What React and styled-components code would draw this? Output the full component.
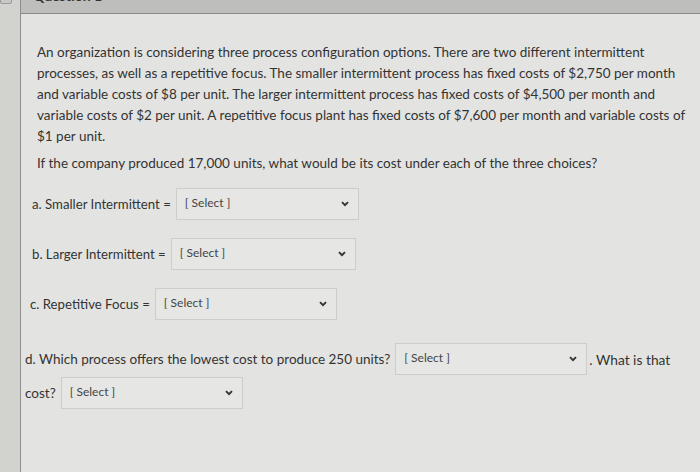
import React from "react";
import styled, { createGlobalStyle } from "styled-components";

const GlobalStyle = createGlobalStyle`
  html, body {
    margin: 0;
    padding: 0;
    background: #e3e4e1;
  }
  body {
    font-family: Lato, "Open Sans", sans-serif;
    color: #333;
  }
`;

const Chevron = () => (
  <svg width="8" height="6" viewBox="0 0 8 6">
    <path d="M1 1.2l3 3 3-3" fill="none" stroke="#333" strokeWidth="1.9" />
  </svg>
);

const Dropdown = ({ width }) => (
  <SelectBox $width={width}>
    <SelectText>[ Select ]</SelectText>
    <Chevron />
  </SelectBox>
);

const App = () => {
  return (
    <>
      <GlobalStyle />
      <Page>
        <Rail>
          <Check />
        </Rail>
        <QuestionBox>
          <Header>
            <HeaderTitle>Question 1</HeaderTitle>
          </Header>
          <Content>
            <Para>
              An organization is considering three process configuration options. There are two different intermittent
              processes, as well as a repetitive focus. The smaller intermittent process has fixed costs of $2,750 per month
              and variable costs of $8 per unit. The larger intermittent process has fixed costs of $4,500 per month and
              variable costs of $2 per unit. A repetitive focus plant has fixed costs of $7,600 per month and variable costs of
              $1 per unit.
            </Para>
            <Para>
              If the company produced 17,000 units, what would be its cost under each of the three choices?
            </Para>
            <Row $top={14} $indent={7}>
              <Label>a. Smaller Intermittent =</Label>
              <Dropdown width={183} />
            </Row>
            <Row $top={18} $indent={7}>
              <Label>b. Larger Intermittent =</Label>
              <Dropdown width={185} />
            </Row>
            <Row $top={18} $indent={5}>
              <Label>c. Repetitive Focus =</Label>
              <Dropdown width={182} />
            </Row>
            <Row $top={23} $indent={0}>
              <Label $size={13.5}>d. Which process offers the lowest cost to produce 250 units?</Label>
              <Dropdown width={192} />
              <Label $size={13.8} $tight>. What is that</Label>
            </Row>
            <Row $top={2} $indent={0}>
              <Label $size={13.5}>cost?</Label>
              <Dropdown width={182} />
            </Row>
          </Content>
        </QuestionBox>
      </Page>
    </>
  );
};

const Page = styled.div`
  display: flex;
  width: 700px;
  height: 472px;
  overflow: hidden;
  background: #e3e4e1;
`;

const Rail = styled.div`
  width: 20px;
  flex-shrink: 0;
  background: #d2d2cf;
  border-right: 1px solid #8e8e8c;
  position: relative;
`;

const Check = styled.div`
  position: absolute;
  left: 0;
  top: -8px;
  width: 10px;
  height: 10px;
  border: 1px solid #9a9a98;
  border-radius: 2px;
  background: #c8c8c6;
`;

const QuestionBox = styled.div`
  flex: 1;
  display: flex;
  flex-direction: column;
`;

const Header = styled.div`
  height: 13px;
  background: #bebebc;
  border-bottom: 1px solid #8a8a88;
  overflow: hidden;
  padding-left: 12px;
`;

const HeaderTitle = styled.div`
  font-weight: 700;
  font-size: 14px;
  line-height: 14px;
  color: #333;
  margin-top: -11px;
`;

const Content = styled.div`
  padding: 28px 8px 0 4px;
`;

const Para = styled.p`
  margin: 0 0 6px;
  padding-left: 12px;
  font-size: 13.5px;
  line-height: 21px;
  color: #333;
  white-space: pre-line;
`;

const Row = styled.div`
  display: flex;
  align-items: center;
  gap: 5px;
  margin-top: ${(p) => p.$top}px;
  padding-left: ${(p) => p.$indent}px;
`;

const Label = styled.span`
  font-size: ${(p) => p.$size || 13.2}px;
  color: #333;
  white-space: nowrap;
  margin-left: ${(p) => (p.$tight ? "-3px" : "0")};
`;

const SelectBox = styled.div`
  width: ${(p) => p.$width}px;
  height: 32px;
  box-sizing: border-box;
  border: 1px solid #cdcec9;
  background: #e6e7e4;
  display: flex;
  align-items: center;
  justify-content: space-between;
  padding: 0 9px 0 8px;
`;

const SelectText = styled.span`
  font-size: 12px;
  color: #444;
  margin-top: -4px;
`;

export default App;
